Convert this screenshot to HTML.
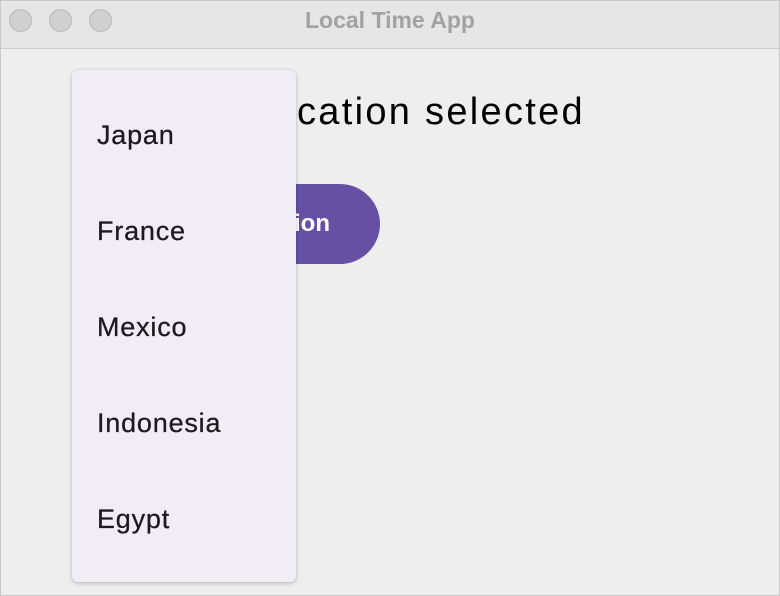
<!DOCTYPE html>
<html><head><style>
body{margin:0;width:780px;height:596px;overflow:hidden;background:#fff;font-family:"Liberation Sans",sans-serif}
.win{position:absolute;left:0;top:0;width:778px;height:594px;border:1px solid #c8c8c8;background:#eeeeee}
.title{position:absolute;left:0;top:0;width:778px;height:47px;background:#e6e6e6;border-bottom:1px solid #cfcfcf}
.dot{position:absolute;top:8px;width:23px;height:23px;border-radius:50%;background:#d0d0d0;border:1px solid #b9b9b9;box-sizing:border-box}
.tt{position:absolute;left:0;width:778px;top:6px;text-align:center;font-weight:bold;font-size:23px;color:#a2a2a2}
.msg{position:absolute;left:296px;top:90px;font-size:38px;letter-spacing:2.3px;color:#000;white-space:nowrap}
.msg span{position:absolute;right:100%;top:0}
.btn{position:absolute;left:150px;top:183px;height:80px;width:229px;background:#6750a4;border-radius:40px;color:#fff;font-weight:bold;font-size:24px;line-height:80px;text-align:right;padding-right:50px;box-sizing:border-box;white-space:nowrap}
.menu{position:absolute;left:72px;top:70px;width:224px;height:512px;background:#f2ecf6;border-radius:6px;box-shadow:0 1px 4px rgba(0,0,0,.25)}
.item{height:96px;line-height:96px;padding-left:25px;font-size:27px;color:#1d1b20;letter-spacing:0.8px;-webkit-text-stroke:0.3px #1d1b20}
</style></head><body>
<div class="win">
<div class="title">
<div class="dot" style="left:8px"></div><div class="dot" style="left:48px"></div><div class="dot" style="left:88px"></div>
<div class="tt">Local Time App</div>
</div>
<div class="msg"><span>No lo</span>cation selected</div>
<div class="btn">Select Location</div>
</div>
<div class="menu">
<div class="item" style="margin-top:17px">Japan</div>
<div class="item">France</div>
<div class="item">Mexico</div>
<div class="item">Indonesia</div>
<div class="item">Egypt</div>
</div>
</body></html>
